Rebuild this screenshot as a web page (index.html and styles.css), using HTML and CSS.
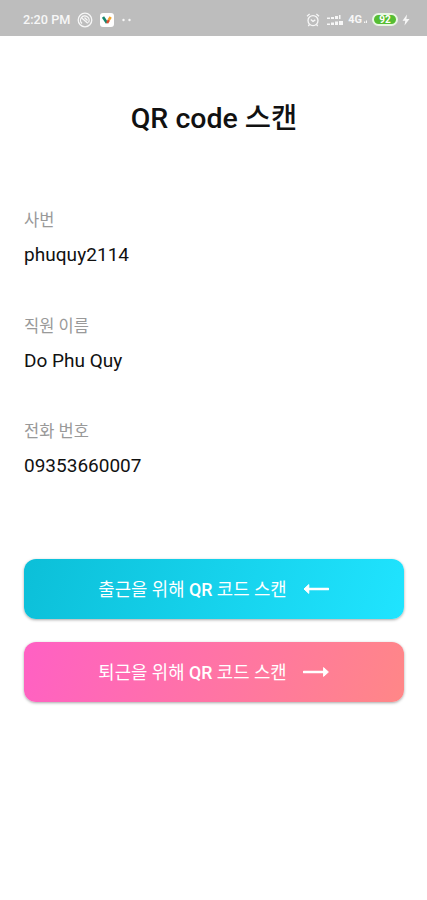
FILE: index.html
```html
<!DOCTYPE html>
<html lang="ko">
<head>
<meta charset="utf-8">
<meta name="viewport" content="width=device-width, initial-scale=1">
<title>QR code 스캔</title>
<link rel="stylesheet" href="styles.css">
</head>
<body>
<header class="status">
  <div class="status-left">
    <span class="clock">2:20 PM</span>
    <svg class="ring" width="16" height="16" viewBox="0 0 16 16" fill="none" stroke="currentColor" stroke-width="1.3"><circle cx="8" cy="8" r="6.8"/><path d="M5 11.5A4.3 4.3 0 1 1 11.5 10.5M5 6.2l5.8 5M7.5 5.5l3 3"/></svg>
    <svg class="app" width="14" height="14" viewBox="0 0 14 14"><rect width="14" height="14" rx="3" fill="#fff"/><path d="M3 4l4 6" stroke="#16866d" stroke-width="2.6"/><path d="M7 10l2-3" stroke="#d94e32" stroke-width="2.4"/><path d="M8.7 7l2-3" stroke="#f2a52c" stroke-width="2.6"/></svg>
    <svg width="10" height="4" viewBox="0 0 10 4" fill="currentColor"><circle cx="1.5" cy="2" r="1.2"/><circle cx="7.5" cy="2" r="1.2"/></svg>
  </div>
  <div class="status-right">
    <svg width="14" height="14" viewBox="0 0 14 14" fill="none" stroke="currentColor" stroke-width="1.3"><circle cx="7" cy="7.6" r="5"/><path d="M1 3.2L3.6 1M13 3.2L10.4 1M4.8 6.5L7 8.4l2.3-1.5M3.5 11.5l-1.2 1.5M10.5 11.5l1.2 1.5"/></svg>
    <svg class="signal" width="18" height="12" viewBox="0 0 18 12" fill="currentColor"><path d="M1 3.5h3v1.5H1zM5 3h3v2H5zM9 2h3v3H9zM13 1h1.5v4H13zM1 9.5h3V11H1zM5 8.5h3V11H5zM9 7.5h3V11H9zM13 7h4v4h-4z"/></svg>
    <span class="network">4G</span>
    <svg class="dot" width="4" height="8" viewBox="0 0 4 8" fill="currentColor"><path d="M0 5.5h1.3V7H0zM2 4.5h1V7H2z"/></svg>
    <span class="battery">92</span>
    <svg width="8" height="12" viewBox="0 0 8 12" fill="currentColor"><path d="M5 .5L.5 6.8h2.8L2.5 11.5 7.5 5H4.4z"/></svg>
  </div>
</header>
<main class="screen">
  <h1 class="title">QR code 스캔</h1>
  <dl class="details">
    <div class="field"><dt>사번</dt><dd class="employee-id">phuquy2114</dd></div>
    <div class="field"><dt>직원 이름</dt><dd class="name">Do Phu Quy</dd></div>
    <div class="field"><dt>전화 번호</dt><dd class="phone">09353660007</dd></div>
  </dl>
  <div class="actions">
    <button class="scan scan-in" type="button"><span>출근을 위해 <b>QR</b> 코드 스캔</span><svg width="26" height="12" viewBox="0 0 26 12"><path d="M4 6h21.2" stroke="currentColor" stroke-width="2.6" stroke-linecap="round"/><path d="M1 6l4.8-4.4v8.8z" fill="currentColor" stroke="currentColor" stroke-linejoin="round"/></svg></button>
    <button class="scan scan-out" type="button"><span>퇴근을 위해 <b>QR</b> 코드 스캔</span><svg width="26" height="12" viewBox="0 0 26 12"><path d="M1 6h21" stroke="currentColor" stroke-width="2.6" stroke-linecap="round"/><path d="M25.4 6l-4.8-4.4v8.8z" fill="currentColor" stroke="currentColor" stroke-linejoin="round"/></svg></button>
  </div>
</main>
</body>
</html>
```
FILE: styles.css
```css
* { box-sizing: border-box; }
body {
  margin: 0;
  min-height: 900px;
  background: #fff;
  color: #111;
  font-family: Roboto, "Noto Sans CJK KR", sans-serif;
}
.status {
  display: flex;
  justify-content: space-between;
  height: 36px;
  padding: 3px 17px 0 23px;
  background: #bdbdbd;
  color: #f7f7f7;
}
.status-left, .status-right { display: flex; align-items: center; }
.clock { width: 54px; font-size: 12.7px; font-weight: 500; white-space: nowrap; }
.ring { margin-right: 7px; }
.app { margin-right: 8px; }
.signal { margin: 0 4px 0 6px; }
.network { font-size: 11px; font-weight: 700; }
.dot { margin: 0 4px 0 2px; }
.battery {
  width: 26px;
  height: 13px;
  margin-right: 4px;
  border: 2px solid #e9f7e4;
  border-radius: 7px;
  background: #55bd32;
  color: #fff;
  font-size: 10px;
  font-weight: 700;
  line-height: 9px;
  text-align: center;
}
.screen { padding: 63px 23px 0 24px; }
.title {
  margin: 0;
  font-size: 28.5px;
  font-weight: 500;
  line-height: 40px;
  text-align: center;
}
.details { margin: 69px 0 0; }
.field { height: 105.5px; }
.field dt { color: #999; font-size: 16.5px; line-height: 26px; }
.field dd { margin: 8px 0 0; font-size: 19px; line-height: 26px; }
.employee-id { letter-spacing: .05px; }
.actions { display: grid; gap: 23px; margin-top: 34.5px; }
.scan {
  display: flex;
  align-items: center;
  justify-content: center;
  gap: 16px;
  height: 60px;
  padding: 0 1px 0 0;
  border: 0;
  border-radius: 12px;
  box-shadow: 0 1px 3px rgba(0, 0, 0, .35);
  color: #fff;
  font: 400 17.8px/26px Roboto, "Noto Sans CJK KR", sans-serif;
}
.scan span { padding-top: 2px; }
.scan b { font-weight: 500; }
.scan-in { background: linear-gradient(110deg, #0cbfd8, #20e4ff); }
.scan-out { background: linear-gradient(110deg, #ff60c4, #ff8787); }
```
